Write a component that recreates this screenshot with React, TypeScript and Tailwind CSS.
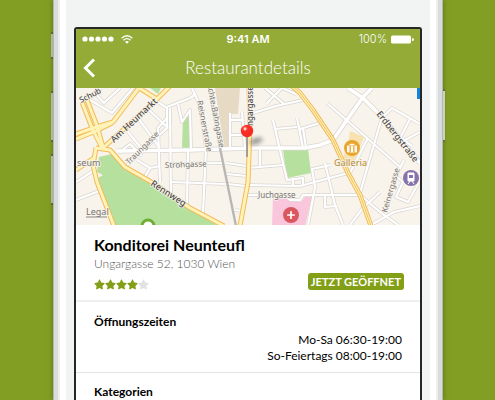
import { FaStar, FaPlus, FaSuitcase } from "react-icons/fa";

const ROADS = [
  "M90 100L112 113L133 88",
  "M83 102L95 93L104 103L120 88",
  "M95 93L101 88",
  "M76 182L93 171",
  "M76 200L99 191",
  "M125 128L141 148",
  "M138 118L160 148",
  "M148 109L168 128",
  "M158 102L167 108L167 128L127 165",
  "M167 107L190 98L196 94",
  "M167 118L158 128L160 182",
  "M170 108L171 198",
  "M171 182L225 184",
  "M137 160L150 168L143 180",
  "M150 168L160 166",
  "M120 152L130 144L142 156",
  "M178 104L182 122L190 110L191 148",
  "M188 150L187 205",
  "M192 88L200 106L206 148L203 213",
  "M171 164L222 163",
  "M230 113V148",
  "M242 112L245 148",
  "M230 120H242",
  "M230 135H244",
  "M226 163L247 166",
  "M227 174L247 176",
  "M228 184L246 186",
  "M235 210L242 211",
  "M248 168L283 165",
  "M260 150V167",
  "M273 120L287 180L303 178V186",
  "M275 129L297 127",
  "M297 118L303 148",
  "M303 128L306 148",
  "M300 129L320 123",
  "M250 114L276 106L303 100",
  "M265 88L284 104",
  "M266 104L282 88",
  "M282 88L296 94",
  "M248 185L300 186L348 173",
  "M248 195H284L290 200H300L303 195H360",
  "M293 178V186",
  "M327 103L400 167",
  "M368 138L350 173",
  "M382 117L360 193",
  "M380 120L392 108L420 124",
  "M388 128L412 146",
  "M410 119L398 142",
  "M420 132L405 140",
  "M325 163L335 205L343 225",
  "M331 165L312 169L315 187L308 225",
  "M325 196V207L337 206",
  "M350 225L362 209L380 192",
  "M360 195L380 212L398 225",
  "M371 225L394 212L420 206",
  "M404 160L396 176L403 182L396 197L408 202L418 184",
];

const MAIN_ROADS = [
  "M117 151L190 150L254 148H305L320 145L333 140L363 97L372 88",
  "M348 88L363 98L382 117L420 163",
];

const YELLOW_ROADS = [
  "M76 134L93 128L113 122L138 89",
  "M76 139L96 131L112 123",
  "M82 102L92 128L102 148",
  "M87 100L97 126L103 147",
  "M103 148L125 128L157 99L170 86",
  "M136 86L157 99",
  "M96 148L93 165L97 182L114 226",
  "M76 170L94 158",
  "M96 148L110 150L125 167L153 183L190 208L224 226",
  "M249 86L250 128L248 182L240 226",
  "M292 86L300 93L313 110L333 140L348 173L360 195L371 226",
];

const STREETS = [
  { name: "Schub", x: 81, y: 103, angle: -27, size: 8 },
  { name: "Am Heumarkt", x: 114, y: 143, angle: -43, size: 9 },
  { name: "Traungasse", x: 129, y: 165, angle: -45, size: 8, light: true },
  { name: "seum", x: 77, y: 166, angle: 0, size: 9, light: true },
  { name: "Legal", x: 86, y: 215, angle: 0, size: 9, light: true },
  { name: "Strohgasse", x: 165, y: 168, angle: -2, size: 8, light: true },
  { name: "Rennweg", x: 150, y: 185, angle: 33, size: 9 },
  { name: "Reisnerstraße", x: 197, y: 101, angle: 79, size: 8, light: true },
  { name: "chte-Bahngasse", x: 208, y: 89, angle: 79, size: 8, light: true },
  { name: "ngargasse", x: 253, y: 126, angle: -90, size: 8 },
  { name: "Juchgasse", x: 258, y: 198, angle: 0, size: 8, light: true },
  { name: "Erdbergstraße", x: 376, y: 114, angle: 52, size: 9 },
  { name: "Keinergasse", x: 387, y: 213, angle: -74, size: 8, light: true },
];

const HOURS = ["Mo-Sa 06:30-19:00", "So-Feiertags 08:00-19:00"];

const StreetMap = () => (
  <svg
    role="img"
    aria-label="Karte"
    viewBox="76 88 344 137"
    preserveAspectRatio="xMidYMid slice"
    className="block h-[137px] w-full"
  >
    <defs>
      <filter id="soft" x="-50%" y="-50%" width="200%" height="200%">
        <feGaussianBlur stdDeviation="2" />
      </filter>
      <radialGradient id="pin" cx="0.35" cy="0.3" r="0.8">
        <stop offset="0" stopColor="#ff8070" />
        <stop offset="0.3" stopColor="#fb3028" />
        <stop offset="1" stopColor="#f02a22" />
      </radialGradient>
    </defs>
    <rect x="70" y="80" width="360" height="150" fill="#f8f4ec" />
    <g fill="#b5e09e">
      <path d="M99 157L112 154L125 167L153 185L190 210L222 226H114L98 178L103 175L97 172Z" />
      <path d="M150 88H161L158 94Z" />
      <path d="M183 118L191 116V148H182Z" />
      <path d="M283 150L308 149L311 173L287 178Z" />
    </g>
    <path d="M215 88H240L238 114H230L229 147H224Z" fill="#e7dac4" />
    <path d="M273 197H288L293 202H301L305 197H312L305 226H272Z" fill="#f9c6dc" />
    <path d="M350 131L364 137L354 162L342 160L348 145Z" fill="#f7e2b0" />

    <g fill="none" strokeLinejoin="round">
      <g stroke="#d9d5d1" strokeWidth="3.6">
        {ROADS.map((d) => <path key={d} d={d} />)}
      </g>
      <g stroke="#d9d5d1" strokeWidth="5">
        {MAIN_ROADS.map((d) => <path key={d} d={d} />)}
      </g>
      <g stroke="#fff" strokeWidth="2.2">
        {ROADS.map((d) => <path key={d} d={d} />)}
      </g>
      <g stroke="#fff" strokeWidth="3.6">
        {MAIN_ROADS.map((d) => <path key={d} d={d} />)}
      </g>
      <path d="M209 88L220 148L236 226" stroke="#b9b7b4" strokeWidth="2.4" />
      <g stroke="#f2bb5c" strokeWidth="5">
        {YELLOW_ROADS.map((d) => <path key={d} d={d} />)}
      </g>
      <g stroke="#fff3b8" strokeWidth="3">
        {YELLOW_ROADS.map((d) => <path key={d} d={d} />)}
      </g>
      <path d="M292 86L300 93L313 110L333 140L348 173L360 195L371 226" stroke="#f4be62" strokeWidth="1" />
    </g>

    <g fontFamily="'Noto Sans', sans-serif" stroke="#f8f4ec" strokeWidth="1.5" paintOrder="stroke">
      {STREETS.map((street) => (
        <text
          key={street.name}
          transform={`translate(${street.x} ${street.y}) rotate(${street.angle})`}
          fontSize={street.size}
          fontWeight={street.light ? 400 : 500}
          fill={street.light ? "#757270" : "#4f4c4a"}
        >
          {street.name}
        </text>
      ))}
      <text x="334" y="166" fontSize="9" fontWeight="500" fill="#bd9446">Galleria</text>
    </g>
    <path d="M86 217H107" stroke="#8a8784" strokeWidth="1" />

    <circle cx="352" cy="148" r="8" fill="#e9a52c" />
    <FaSuitcase x="347" y="143" size={10} color="#fff" />
    <path d="M350.5 145V152M353.5 145V152" stroke="#e9a52c" strokeWidth="0.8" />
    <circle cx="291" cy="215" r="8" fill="#d95860" />
    <FaPlus x="286.5" y="210.5" size={9} color="#fff" />
    <circle cx="411" cy="178" r="8" fill="#8673ab" />
    <path d="M408 173H414V181H408ZM408 184L410 181M414 184L412 181" fill="#fff" stroke="#fff" />
    <rect x="409" y="175" width="4" height="3" fill="#8673ab" />
    <circle cx="148" cy="226" r="6" fill="#fff" stroke="#6fae34" strokeWidth="3" />
    <rect x="417" y="88" width="4" height="11" fill="#1583d8" />

    <ellipse cx="256" cy="141" rx="7" ry="3" fill="#555" opacity="0.6" transform="rotate(-18 256 141)" filter="url(#soft)" />
    <path d="M247 136V157" stroke="#8f8f8c" strokeWidth="1.6" />
    <circle cx="247" cy="131" r="6.2" fill="url(#pin)" />
    <circle cx="245" cy="129" r="1.4" fill="#fff" opacity="0.7" />
  </svg>
);

const StatusBar = () => (
  <div className="grid h-5 grid-cols-3 items-center px-[6px] font-[Inter,sans-serif] text-[11px]">
    <div className="flex items-center gap-[7px]">
      <svg viewBox="0 0 32 6" className="h-[6px] w-8" fill="#fff">
        <circle cx="3" cy="3" r="2.6" />
        <circle cx="9.5" cy="3" r="2.6" />
        <circle cx="16" cy="3" r="2.6" />
        <circle cx="22.5" cy="3" r="2.6" />
        <circle cx="29" cy="3" r="2.6" />
      </svg>
      <svg viewBox="0 0 12 9" className="h-[9px] w-3" fill="none" stroke="#fff" strokeWidth="1.3">
        <path d="M0.6 3.2Q6 -1.6 11.4 3.2M2.5 5.2Q6 2.2 9.5 5.2" />
        <path d="M4 6.7Q6 5.2 8 6.7L6 8.8Z" fill="#fff" stroke="none" />
      </svg>
    </div>
    <span className="text-center font-semibold">9:41 AM</span>
    <div className="flex items-center justify-end gap-1">
      <span className="font-light">100%</span>
      <svg viewBox="0 0 23 9" className="h-[9px] w-[23px]" fill="#fff">
        <rect y="0.5" width="20" height="8" rx="1.5" />
        <path d="M21 3Q23 3 23 4.5Q23 6 21 6Z" />
      </svg>
    </div>
  </div>
);

const SideButton = ({ className }: { className: string }) => (
  <div className={`w-[2px] border-y-2 border-y-[#66703f] bg-[#cdd2c2] ${className}`} />
);

const App = () => {
  return (
    <div className="flex h-screen overflow-hidden bg-[#839f23] font-[Lato,sans-serif]">
      <div className="flex w-[53px] shrink-0 flex-col items-end">
        <SideButton className="mt-8 h-[27px]" />
        <SideButton className="mt-8 h-[51px]" />
        <SideButton className="mt-3 h-[51px]" />
      </div>

      <div className="flex min-w-0 flex-1 border-x border-x-[#b4b8b2] bg-[#d9dcdd] px-1 shadow-[0_0_5px_rgba(50,60,10,0.5)]">
        <div className="flex min-w-0 flex-1 border-x-2 border-x-[#eceeef] bg-white px-[6px]">
          <div className="flex min-w-0 flex-1 bg-[#f2f3f3] px-2 pt-[27px]">
            <main className="min-w-0 flex-1 rounded-t-[3px] border-2 border-b-0 border-[#262626] bg-white">
              <header className="h-[59px] bg-[#94ab37] text-white">
                <StatusBar />
                <div className="grid h-[38px] grid-cols-[30px_1fr_30px] items-center">
                  <button type="button" aria-label="Zurück" className="pl-[7px]">
                    <svg viewBox="0 0 12 20" className="h-5 w-3" fill="none" stroke="#fff" strokeWidth="3">
                      <path d="M11 1.5L2.5 10L11 18.5" />
                    </svg>
                  </button>
                  <h1 className="text-center text-[17px] font-light">Restaurantdetails</h1>
                </div>
              </header>

              <StreetMap />

              <section className="border-b-2 border-[#efefef] pt-[10px] pr-4 pb-[10px] pl-[18px]">
                <h2 className="text-[16px] leading-5 font-bold text-black">Konditorei Neunteufl</h2>
                <p className="text-[12px] leading-[18px] font-light text-[#555]">Ungargasse 52, 1030 Wien</p>
                <div className="flex items-end justify-between">
                  <div role="img" aria-label="4 von 5 Sternen" className="flex text-[11px]">
                    {[1, 2, 3, 4, 5].map((n) => (
                      <FaStar key={n} className={n <= 4 ? "text-[#839f17]" : "text-[#e2e2e2]"} />
                    ))}
                  </div>
                  <span className="rounded-[3px] bg-[#839f17] px-[3px] text-[11px] leading-[17px] font-bold text-white">
                    JETZT GEÖFFNET
                  </span>
                </div>
              </section>

              <section className="border-b border-[#e2e2e2] px-[18px] pt-[10px] pb-2">
                <h3 className="text-[12px] leading-5 font-bold text-black">Öffnungszeiten</h3>
                <div className="text-right text-[12px] leading-4 text-black">
                  {HOURS.map((line) => (
                    <p key={line}>{line}</p>
                  ))}
                </div>
              </section>

              <section className="px-[18px] pt-[9px]">
                <h3 className="text-[12px] leading-5 font-bold text-black">Kategorien</h3>
              </section>
            </main>
          </div>
        </div>
      </div>

      <div className="flex w-[52px] shrink-0 flex-col items-start">
        <SideButton className="mt-[89px] h-[53px]" />
      </div>
    </div>
  );
};

export default App;
